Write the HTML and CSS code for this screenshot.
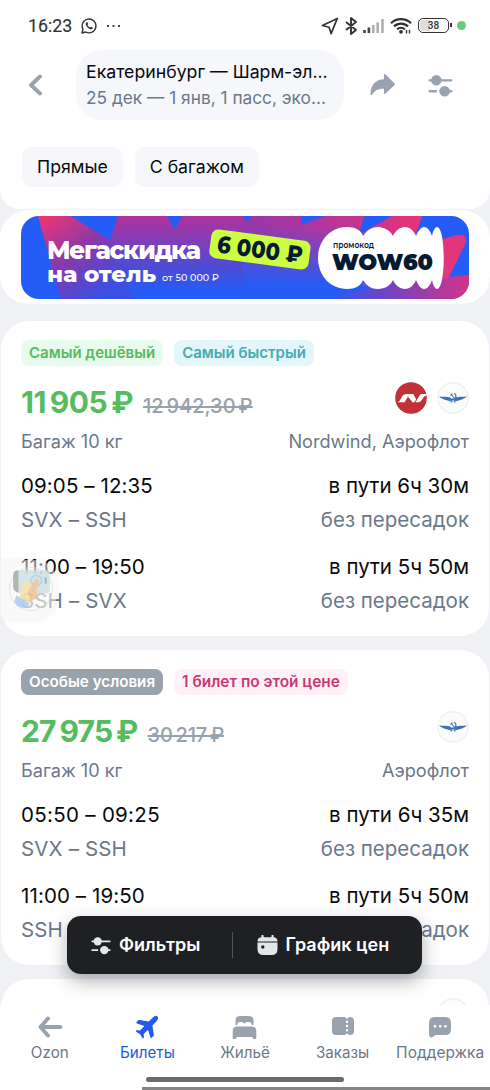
FILE: index.html
```html
<!DOCTYPE html>
<html lang="ru">
<head>
<meta charset="utf-8">
<title>Билеты</title>
<link rel="stylesheet" href="styles.css">
</head>
<body>
<svg width="0" height="0" class="defs">
  <defs>
    <symbol id="sliders" viewBox="0 0 24 22">
      <path d="M1.5 6H22.5M1.5 16.5H22.5" stroke="currentColor" stroke-width="2.2" stroke-linecap="round"/>
      <circle cx="8" cy="6" r="5" fill="currentColor"/>
      <path d="M8.5 16.5h2.500" stroke="var(--gap)" stroke-width="3"/>
      <circle cx="16" cy="16.5" r="5" fill="currentColor"/>
    </symbol>
    <symbol id="aeroflot" viewBox="0 0 32 32">
      <circle cx="16" cy="16" r="15.2" fill="#fbfbfb" stroke="#f0f0f0" stroke-width="1.4"/>
      <path d="M2 14.5c4 .3 8 .3 11 .8l1 1.2h4l1-1.2c3-.5 7-.5 11-.8-2 1.700-4 2.700-7 3.600-2 .7-3 .9-4.300 1.400L17 18.500h-2l-1.700 1c-1.300-.5-2.300-.7-4.300-1.400-3-.9-5-1.900-7-3.600z" fill="#3f74b2"/>
      <path d="M17 11.300a3.200 3.200 0 0 1-.8 6.100M14 12l4 5M13.500 13.500l2-1.800M13.800 20.500l1.400-1.700M18.200 20.500l-1.400-1.700" fill="none" stroke="#3f74b2" stroke-width="1.100"/>
    </symbol>
  </defs>
</svg>
<div class="screen">
  <header class="header">
    <div class="status">
      <span class="clock">16:23</span>
      <svg class="wa" width="16" height="16" viewBox="0 0 16 16"><path d="M1 15l1-3.700A6.900 6.900 0 1 1 4.700 14z" fill="none" stroke="#333" stroke-width="1.400" stroke-linejoin="round"/><path d="M5.400 4.200c-1.500 1.300-.6 3.500 1.200 5.200 1.800 1.700 3.900 2.600 5.200 1.100l.1-.8-1.900-1-1 .9C7.900 9.200 6.900 8.200 6.400 7.100l.8-.9-.8-1.900z" fill="#333"/></svg>
      <svg class="dots" width="15" height="4" viewBox="0 0 15 4"><path d="M1 2h2M6.500 2h2M12 2h2" stroke="#444" stroke-width="2"/></svg>
      <svg class="loc" width="18" height="18" viewBox="0 0 18 18"><path d="M16.300 1.400L1.400 8.500l6.700 1.700 2 6.400z" fill="none" stroke="#333" stroke-width="1.700" stroke-linejoin="round"/></svg>
      <svg class="bt" width="12" height="18" viewBox="0 0 12 18"><path d="M1 5l10 8-5 4V1l5 4L1 13" fill="none" stroke="#333" stroke-width="1.900" stroke-linejoin="round"/></svg>
      <svg class="sig" width="22" height="14" viewBox="0 0 22 14"><path d="M1.500 14v-3M5.900 14V8.500" stroke="#444" stroke-width="2.600"/><path d="M10.300 14V6M14.700 14V3.500M19.500 14V0" stroke="#b0b0b0" stroke-width="2.600"/></svg>
      <svg class="wifi" width="22" height="17" viewBox="0 0 22 17"><path d="M1 6.200a14.500 14.500 0 0 1 20 0M4 9.400a10 10 0 0 1 14 0M7 12.300a6 6 0 0 1 8 0" fill="none" stroke="#333" stroke-width="2.200"/><circle cx="11" cy="14.800" r="1.900" fill="#333"/><path d="M16.500 13v3.500M19.500 13v3.500" stroke="#333" stroke-width="1.400"/></svg>
      <span class="battery"><span class="level">38</span></span>
      <span class="led"></span>
    </div>
    <div class="topbar">
      <svg class="back" width="15" height="22" viewBox="0 0 15 22"><path d="M12 2.500L3 11l9 8.500" fill="none" stroke="#99a3af" stroke-width="3.800" stroke-linecap="round" stroke-linejoin="round"/></svg>
      <div class="route">
        <div class="route-title">Екатеринбург — Шарм-эл...</div>
        <div class="route-sub">25 дек — 1 янв, 1 пасс, эко...</div>
      </div>
      <svg class="share" width="25" height="22" viewBox="0 0 25 22"><path d="M14 .8c0-.8.7-1 1.300-.5l8.800 8.700c.9.9.9 1.600 0 2.500l-8.800 8.300c-.6.600-1.300.3-1.300-.5v-4.600C8 14.300 4.500 16.500 2.200 20.500c-.5.9-1.700.7-1.700-.3C.5 11 5.500 5.500 14 5.300z" fill="#99a3af"/></svg>
      <svg class="tune" width="25" height="23"><use href="#sliders"/></svg>
    </div>
    <div class="chips">
      <span class="chip">Прямые</span>
      <span class="chip">С багажом</span>
    </div>
  </header>

  <section class="promo">
    <svg width="448" height="83" viewBox="0 0 448 83">
      <defs>
        <linearGradient id="pg" gradientUnits="userSpaceOnUse" x1="20" y1="0" x2="75" y2="83"><stop offset="0" stop-color="#f0366f"/><stop offset=".5" stop-color="#8938aa"/><stop offset="1" stop-color="#3a50e4"/></linearGradient>
        <linearGradient id="pm" gradientUnits="userSpaceOnUse" x1="0" y1="0" x2="0" y2="75"><stop offset="0" stop-color="#b0329b"/><stop offset=".7" stop-color="#4b4bd8"/><stop offset="1" stop-color="#255cf5"/></linearGradient>
        <linearGradient id="pt" gradientUnits="userSpaceOnUse" x1="231" y1="0" x2="400" y2="0"><stop offset="0" stop-color="#9a36a8"/><stop offset=".6" stop-color="#c23592"/><stop offset="1" stop-color="#e83474"/></linearGradient>
        <linearGradient id="pf" gradientUnits="userSpaceOnUse" x1="0" y1="8" x2="0" y2="70"><stop offset="0" stop-color="#255cf5" stop-opacity="0"/><stop offset="1" stop-color="#255cf5"/></linearGradient>
        <linearGradient id="pb" gradientUnits="userSpaceOnUse" x1="300" y1="0" x2="448" y2="0"><stop offset="0" stop-color="#265bf5"/><stop offset=".55" stop-color="#8240b8"/><stop offset="1" stop-color="#d23488"/></linearGradient>
        <clipPath id="pc"><rect width="448" height="83" rx="18"/></clipPath>
      </defs>
      <g clip-path="url(#pc)">
        <rect width="448" height="83" fill="#255cf5"/>
        <path d="M97 0h49l8 14 7-14h61l9 20 0 55H72z" fill="url(#pm)"/>
        <path d="M17 0h32l43 26 20 57H40z" fill="url(#pg)"/>
        <path d="M231 0h49v9L304 0h39l-5 19 33-19h30l-9 26-54 49H222V10z" fill="url(#pt)"/>
        <path d="M222 0h9v8zM222 8h120v75H222z" fill="url(#pf)"/>
        <path d="M422 23l14-4q10-2 9 7l-17 35 20-2v24H300l60-13z" fill="url(#pb)"/>
        <path d="M422 23l14-4q10-2 9 7l-17 35-9 4z" fill="#e0367c"/>
      </g>
      <g font-family="Montserrat, Inter, sans-serif" font-weight="800" fill="#fff">
        <text x="26" y="42.500" font-size="24.500" textLength="154">Мегаскидка</text>
        <text x="26" y="66" font-size="22" textLength="109" lengthAdjust="spacingAndGlyphs">на отель</text>
        <text x="141" y="65" font-size="9.500" font-weight="500" textLength="57">от 50 000 ₽</text>
      </g>
      <g transform="rotate(7.500 239 33)">
        <rect x="189" y="19" width="100" height="29" rx="7" fill="#ccff42"/>
        <text x="196" y="42" font-family="Montserrat, Inter, sans-serif" font-weight="800" font-size="24" textLength="86" lengthAdjust="spacingAndGlyphs" fill="#061a32">6 000 ₽</text>
      </g>
      <path d="M326 11c8 0 14 3 16 9 4-6 9-9 15-9s13 4 15 9c2-5 7-9 12-9s9 4 11 9c2-5 5-9 8-9s6 3 8 9c1-5 3-9 5-9 9 0 9 62 0 62-2 0-4-4-5-9-2 6-5 9-8 9s-6-4-8-9c-2 5-6 9-11 9s-10-4-12-9c-2 5-8 9-15 9s-11-3-15-9c-2 6-8 9-16 9-17 0-29-14-29-31s12-31 29-31z" fill="#fff"/>
      <g font-family="Montserrat, Inter, sans-serif" fill="#061a32">
        <text x="312" y="32" font-size="8.300" font-weight="600" textLength="41" lengthAdjust="spacingAndGlyphs">промокод</text>
        <text x="311" y="53.500" font-size="23.500" font-weight="900" textLength="101" lengthAdjust="spacingAndGlyphs">WOW60</text>
      </g>
    </svg>
  </section>

  <article class="card">
    <div class="badges"><span class="badge green">Самый дешёвый</span><span class="badge teal">Самый быстрый</span></div>
    <div class="price-row">
      <span class="price">11 905 ₽</span><span class="old">12 942,30 ₽</span>
      <span class="logos">
        <svg width="32" height="32" viewBox="0 0 32 32"><circle cx="16" cy="16" r="15.800" fill="#c03236"/><path d="M.7 20.300c3.300 0 4-1.300 5.500-4.300 1.500-2.900 3-3.900 6-3.900h2.300l-4.900 8.200zM13 14.700l1.700-2.600h3.600l2.900 5.400-1.700 2.600q-1.600 1.200-2.800-.8zM20.500 20.300l4.200-7q.7-1.200 2.200-1.200h4.300l.5 1.600c-2.200 0-3 1-4.300 3.200-1.600 2.700-2.900 3.400-5 3.400z" fill="#fff"/></svg>
        <svg width="32" height="32"><use href="#aeroflot"/></svg>
      </span>
    </div>
    <div class="row info"><span>Багаж 10 кг</span><span>Nordwind, Аэрофлот</span></div>
    <div class="row time"><span>09:05 – 12:35</span><span>в пути 6ч 30м</span></div>
    <div class="row place"><span>SVX – SSH</span><span>без пересадок</span></div>
    <div class="row time second"><span>11:00 – 19:50</span><span>в пути 5ч 50м</span></div>
    <div class="row place"><span>SSH – SVX</span><span>без пересадок</span></div>
  </article>

  <article class="card">
    <div class="badges"><span class="badge gray">Особые условия</span><span class="badge pink">1 билет по этой цене</span></div>
    <div class="price-row">
      <span class="price wide">27 975 ₽</span><span class="old short">30 217 ₽</span>
      <span class="logos"><svg width="32" height="32"><use href="#aeroflot"/></svg></span>
    </div>
    <div class="row info"><span>Багаж 10 кг</span><span>Аэрофлот</span></div>
    <div class="row time"><span class="loose">05:50 – 09:25</span><span>в пути 6ч 35м</span></div>
    <div class="row place"><span>SVX – SSH</span><span>без пересадок</span></div>
    <div class="row time second"><span>11:00 – 19:50</span><span>в пути 5ч 50м</span></div>
    <div class="row place"><span>SSH – SVX</span><span>без пересадок</span></div>
  </article>

  <article class="card next"><svg width="32" height="32"><use href="#aeroflot"/></svg></article>

  <div class="assist">
    <svg width="44" height="44" viewBox="0 0 42 42"><circle cx="21" cy="21" r="20.500" fill="#fff" fill-opacity=".2" stroke="#ddd" stroke-width=".7"/><g opacity=".8"><rect x="6" y="3" width="33" height="22" rx="3" fill="#cddfe3"/><path d="M9 3v21q-5-1-5-5V8q0-5 5-5z" fill="#a0a4a5"/><path d="M35 10v6" stroke="#92a5aa" stroke-width="2"/><circle cx="26" cy="13" r="5" fill="none" stroke="#a4cce4" stroke-width="1.500"/><path d="M10 29l3-14q4-3 8 2l4 3 3 7-8 7-10-1z" fill="#f4dda0"/><path d="M18 24l7-12q3-1 4 2l-3 8 2 7-8 4z" fill="#efbd8e"/><path d="M7 27l13 8-4 4Q8 40 5 33z" fill="#a8c8ef"/></g></svg>
  </div>

  <div class="toolbar">
    <div class="tool"><svg width="20" height="19"><use href="#sliders"/></svg><span class="tool-filters">Фильтры</span></div>
    <div class="split"></div>
    <div class="tool"><svg width="21" height="20" viewBox="0 0 21 20"><path d="M5.500 1v3M15.500 1v3" stroke="#e5e6eb" stroke-width="2.200" stroke-linecap="round"/><path d="M.5 6.500q0-4.300 4.500-4.300h11q4.500 0 4.500 4.300z" fill="#e5e6eb"/><path d="M.5 7.600h20V14q0 6-6 6h-8q-6 0-6-6z" fill="#e5e6eb"/><circle cx="5.800" cy="12" r="1.700" fill="#1f2024"/></svg><span>График цен</span></div>
  </div>

  <nav class="nav">
    <div class="tabs">
      <div class="tab"><svg width="26" height="24" viewBox="0 0 26 24"><path d="M11 3.500L3.500 12l7.500 8.500M4 12h19.500" fill="none" stroke="#99a3af" stroke-width="3.900" stroke-linecap="round" stroke-linejoin="round"/></svg><span>Ozon</span></div>
      <div class="tab active"><svg width="24" height="24" viewBox="0 0 24 24"><path d="M22.500 1.400c1.200 1.300.7 3-1 4.800L17.400 10.400l1.400 9.200c.1.600 0 1-.4 1.400l-1.500 1.600c-.6.6-1.300.4-1.500-.4L13 14.800 8.700 18.900l.2 3c0 .5-.1.800-.4 1.100-.4.500-.9.400-1.200-.1l-2.200-3.700-3.900-2.400c-.5-.3-.5-.8-.1-1.200.3-.3.6-.4 1.100-.4l3 .2 4.200-4.300L2 8.400c-.8-.3-1-.9-.4-1.500L3.100 5.400c.4-.4.8-.5 1.400-.4l9.300 1.500 4.100-4.100c1.800-1.800 3.500-2.200 4.600-1z" fill="#2359f1"/></svg><span>Билеты</span></div>
      <div class="tab"><svg width="25" height="24" viewBox="0 0 25 24"><path d="M3.500 10V5.500Q3.500 1 8 1h9q4.500 0 4.500 4.500V10h-1.700Q19.500 7 17 7h-2q-2 0-2.500 2Q12 7 10 7H8Q5.500 7 5.200 10z" fill="#99a3af"/><path d="M.7 16q0-4.500 4.500-4.500h14.600q4.500 0 4.500 4.500v7q0 1-1 1h-1.500q-1 0-1.500-2H4.700q-.5 2-1.500 2H1.700q-1 0-1-1z" fill="#99a3af"/></svg><span>Жильё</span></div>
      <div class="tab"><svg width="24" height="20" viewBox="0 0 24 20"><path d="M5 1h9q1 1.500 2 1.500T18 1h1q4 0 4 4v10q0 4-4 4h-1q-1-1.500-2-1.500T14 19H5q-4 0-4-4V5q0-4 4-4z" fill="#99a3af"/><path d="M16 5.700h.01M16 10h.01M16 14.300h.01" stroke="#fff" stroke-width="2.400" stroke-linecap="round"/></svg><span>Заказы</span></div>
      <div class="tab"><svg width="24" height="24" viewBox="0 0 24 24"><path d="M6.500 2h11Q23 2 23 8v6q0 6-5.500 6H8.500q-2 0-4 2.200Q1.200 23.500 1 19V8q0-6 5.500-6z" fill="#99a3af"/><path d="M7 11.300h.01M12.200 11.300h.01M17.400 11.300h.01" stroke="#fff" stroke-width="2.700" stroke-linecap="round"/></svg><span class="support">Поддержка</span></div>
    </div>
    <div class="home"></div>
    <div class="strip"></div>
  </nav>
</div>
</body>
</html>
```

FILE: styles.css
```css
* { box-sizing: border-box; }
body { margin: 0; font-family: Inter, "Noto Sans", sans-serif; font-weight: 370; color: #08090c; }
svg { display: block; flex: none; }
span, .route-title, .route-sub { white-space: nowrap; }
.defs { position: absolute; }
.screen { position: relative; width: 490px; height: 1090px; overflow: hidden; background: #eff1f5; display: flex; flex-direction: column; }

.header { flex: none; height: 209px; background: #fff; border-radius: 0 0 20px 20px; }
.status { height: 50px; display: flex; align-items: center; padding: 1px 0 0 28px; }
.clock { width: 53px; font: 400 17.8px Roboto, sans-serif; color: #333; -webkit-text-stroke: .15px #333; }
.wa { margin-right: 9px; }
.loc { margin-left: 200px; margin-right: 6px; }
.bt { margin-right: 6px; }
.sig { margin-right: 5px; }
.wifi { margin-right: 6px; }
.battery { position: relative; width: 31px; height: 15px; border: 1.500px solid #333; border-radius: 5px; padding: 1px; }
.battery::after { content: ""; position: absolute; right: -4px; top: 4px; width: 2px; height: 4px; background: #333; }
.level { display: block; height: 11px; border-radius: 3px; background: linear-gradient(90deg, #ddd 38%, #fff 38%); font: 500 10px/12px Roboto, sans-serif; text-align: center; color: #333; }
.led { width: 9px; height: 9px; border-radius: 50%; background: #67cd74; margin-left: 8px; }

.topbar { height: 70px; display: flex; align-items: center; padding-left: 28px; }
.back { margin-right: 33px; }
.route { width: 268px; height: 70px; border-radius: 26px; background: #f6f7fb; padding: 9px 0 0 10px; }
.route-title { font-size: 17.700px; line-height: 26px; }
.route-sub { font-size: 17.300px; line-height: 26px; color: #6b7888; }
.share { margin-left: 26px; margin-right: 33px; color: #99a3af; }
.tune { --gap: #fff; color: #99a3af; }

.chips { display: flex; gap: 12px; padding: 27px 0 0 22px; }
.chip { height: 40px; line-height: 40px; padding: 0 15px; border-radius: 10px; background: #f6f7fb; font-size: 17.700px; }

.promo { flex: none; height: 94px; margin: 1px 0 17px; padding: 6px 21px 5px; background: #fff; border-radius: 28px; }

.card { flex: none; height: 315px; margin: 0 1px 14px; padding: 19px 20px 0; background: #fff; border-radius: 28px; }
.badges { display: flex; gap: 11px; }
.badge { height: 26px; line-height: 26px; padding: 0 8px; border-radius: 8px; font-size: 15px; font-weight: 600; }
.green { background: #e8fced; color: #59b95f; }
.teal { background: #e3f6fa; color: #49aab2; }
.gray { background: #99a3ad; color: #fff; font-size: 15.200px; }
.pink { background: #fff1f5; color: #c73875; font-size: 15.400px; }
.price-row { height: 36px; margin-top: 18px; display: flex; align-items: center; }
.price { font-size: 30px; font-weight: 700; color: #55bd5e; word-spacing: -2.600px; letter-spacing: -.5px; }
.price.wide { letter-spacing: -.8px; }
.old { margin: 7px 0 0 10px; font-size: 20px; font-weight: 500; color: #98a2ad; word-spacing: -2.500px; text-decoration: line-through; text-decoration-thickness: 1.500px; }
.old.short { letter-spacing: -.1px; }
.logos { display: flex; gap: 10px; margin: -8px 0 0 auto; }
.row { display: flex; justify-content: space-between; height: 24px; line-height: 24px; }
.info { margin-top: 9px; font-size: 18.150px; color: #6b7888; }
.time { margin-top: 21px; font-size: 20.500px; }
.time > :first-child { letter-spacing: .1px; }
.time > .loose { letter-spacing: .3px; }
.time.second { margin-top: 23px; }
.place { margin-top: 10px; font-size: 20.500px; color: #6b7888; }
.place > :first-child { letter-spacing: .15px; }
.next { display: flex; justify-content: flex-end; }

.assist { position: absolute; left: 0; top: 560px; width: 56px; height: 60px; padding: 7px 0 0 9px; border-radius: 0 20px 20px 0; background: rgba(243, 243, 243, .5); box-shadow: 0 0 5px rgba(130, 130, 130, .1); }

.toolbar { position: absolute; left: 67px; top: 916px; width: 355px; height: 58px; border-radius: 14px; background: #1f2024; color: #fff; box-shadow: 0 7px 18px rgba(20, 22, 28, .34); display: flex; align-items: center; padding-left: 24px; font-size: 18px; font-weight: 600; }
.tool { --gap: #1f2024; display: flex; align-items: center; gap: 8px; }
.tool span { margin-top: -2px; }
.tool svg { color: #e5e6eb; }
.tool-filters { letter-spacing: .05px; }
.split { width: 1px; height: 26px; margin: 0 24px 0 31px; background: #55575c; }

.nav { position: absolute; left: 0; bottom: 0; width: 490px; height: 85px; background: #fff; }
.tabs { display: grid; grid-template-columns: repeat(5, 97.600px); padding-top: 8px; padding-left: 1px; height: 72px; }
.tab { display: flex; flex-direction: column; align-items: center; height: 50px; font-size: 15.200px; line-height: 20px; color: #6b7888; }
.tab svg { margin: auto 0; }
.tab span { margin-top: auto; }
.tab .support { font-size: 15.500px; }
.tab.active { color: #2459d9; }
.home { width: 198px; height: 5px; margin-left: 146px; border-radius: 3px; background: #6b6b6b; }
.strip { width: 348px; height: 3px; margin: 5px 0 0 142px; background: #858585; }
```
